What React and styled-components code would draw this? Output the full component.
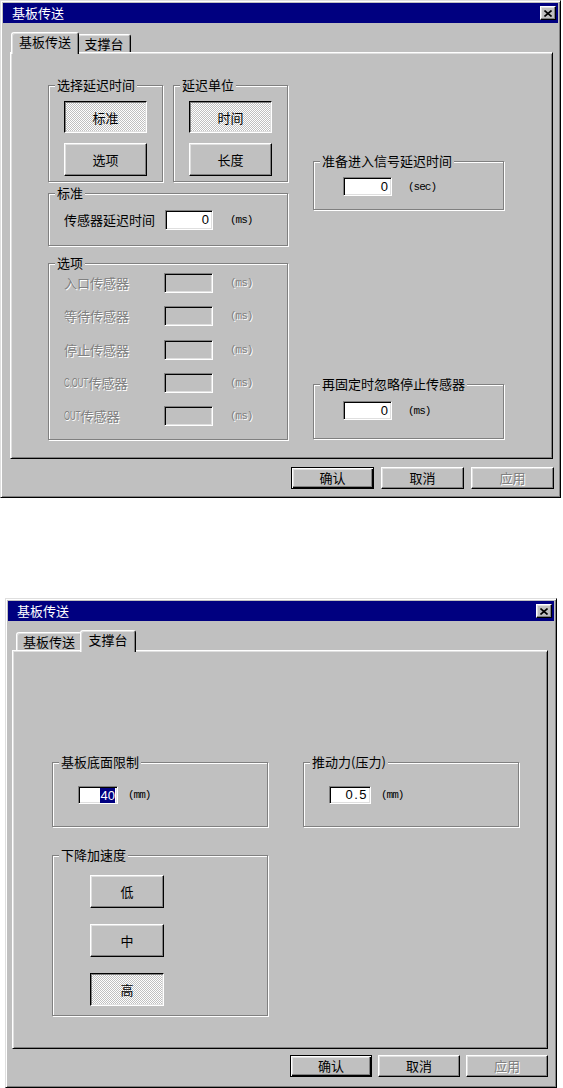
import React from 'react';
import styled, { createGlobalStyle, css } from 'styled-components';

const CJK = `"Noto Sans CJK SC", "Liberation Sans", sans-serif`;
const MONO = `"Liberation Mono", "DejaVu Sans Mono", monospace`;
const NUM = `"Liberation Sans", "Noto Sans CJK SC", sans-serif`;

const GlobalStyle = createGlobalStyle`
  html, body { margin: 0; padding: 0; background: #fff; }
  body { font-family: ${CJK}; font-size: 13px; color: #000; }
  *, *::before, *::after { box-sizing: border-box; }
`;

const Page = styled.div`
  display: flex;
  flex-direction: column;
  align-items: flex-start;
`;

const Window = styled.div`
  width: ${(p) => p.$w}px;
  height: ${(p) => p.$h}px;
  margin: ${(p) => p.$mt || 0}px 0 0 ${(p) => p.$ml || 0}px;
  background: #c0c0c0;
  border: 1px solid;
  border-color: #dfdfdf #000 #000 #dfdfdf;
  box-shadow: inset 1px 1px #fff, inset -1px -1px #808080;
  padding: 2px;
  display: flex;
  flex-direction: column;
`;

const TitleBar = styled.div`
  height: 20px;
  flex: none;
  background: #000080;
  color: #fff;
  display: flex;
  align-items: center;
  justify-content: space-between;
  padding: 0 2px 0 9px;
`;

const TitleText = styled.span`
  font: 13px/20px ${CJK};
`;

const CloseButton = styled.div`
  width: 16px;
  height: 14px;
  background: #c0c0c0;
  display: flex;
  align-items: center;
  justify-content: center;
  border: 1px solid;
  border-color: #fff #000 #000 #fff;
  box-shadow: inset -1px -1px #808080, inset 1px 1px #dfdfdf;
`;

const Body = styled.div`
  padding-left: ${(p) => p.$pl}px;
  display: flex;
  flex-direction: column;
  align-items: flex-start;
`;

const TabStrip = styled.div`
  display: flex;
  align-items: flex-end;
  height: 22px;
  margin-top: 9px;
  margin-bottom: -2px;
  padding-left: ${(p) => p.$pl}px;
  position: relative;
  z-index: 1;
`;

const Tab = styled.div`
  width: ${(p) => p.$w}px;
  height: 18px;
  margin-bottom: 2px;
  display: flex;
  align-items: center;
  justify-content: center;
  background: #c0c0c0;
  border: 1px solid;
  border-bottom: none;
  border-color: #fff #000 transparent #fff;
  border-radius: 3px 3px 0 0;
  box-shadow: inset 1px 1px #dfdfdf, inset -1px 0 #808080;
  font: 13px/14px ${CJK};
  padding-top: 1px;
  ${(p) =>
    p.$active &&
    css`
      width: ${p.$w + 4}px;
      height: 22px;
      margin: 0 -2px;
      padding: 0 0 4px;
      position: relative;
      z-index: 2;
    `}
`;

const Panel = styled.div`
  width: ${(p) => p.$w}px;
  height: ${(p) => p.$h}px;
  flex: none;
  border: 1px solid;
  border-color: #fff #000 #000 #fff;
  box-shadow: inset 1px 1px #dfdfdf, inset -1px -1px #808080;
  padding-left: ${(p) => p.$pl}px;
  display: flex;
  align-items: flex-start;
`;

const Column = styled.div`
  width: ${(p) => p.$w}px;
  margin-left: ${(p) => p.$ml || 0}px;
  display: flex;
  flex-direction: column;
  align-items: flex-start;
`;

const GroupRow = styled.div`
  display: flex;
  align-items: flex-start;
  gap: ${(p) => p.$gap}px;
  margin-top: ${(p) => p.$mt || 0}px;
`;

const Group = styled.div`
  position: relative;
  flex: none;
  width: ${(p) => p.$w}px;
  height: ${(p) => p.$h}px;
  margin-top: ${(p) => p.$mt || 0}px;
  border: 1px solid #808080;
  box-shadow: inset 1px 1px #fff, 1px 1px #fff;
  padding: ${(p) => p.$pt || 0}px 0 0 ${(p) => p.$pl || 0}px;
  display: flex;
  flex-direction: column;
  align-items: ${(p) => (p.$center ? 'center' : 'flex-start')};
  gap: ${(p) => p.$gap || 0}px;
`;

const Legend = styled.span`
  position: absolute;
  top: -8px;
  left: 6px;
  padding: 0 2px;
  background: #c0c0c0;
  font: 13px/14px ${CJK};
  white-space: nowrap;
`;

const FieldRow = styled.div`
  display: flex;
  align-items: center;
  height: ${(p) => p.$h || 20}px;
`;

const Label = styled.span`
  width: ${(p) => p.$w}px;
  display: flex;
  align-items: center;
  font: 13px/14px ${CJK};
  white-space: nowrap;
  ${(p) =>
    p.$disabled &&
    css`
      color: #808080;
      text-shadow: 1px 1px 0 #fff;
    `}
`;

const Latin = styled.span`
  display: inline-block;
  font: 13px/14px ${NUM};
  transform: scaleX(0.6);
  transform-origin: left center;
  margin-right: ${(p) => p.$mr}px;
`;

const TextBox = styled.div`
  width: ${(p) => p.$w}px;
  height: ${(p) => p.$h || 20}px;
  flex: none;
  border: 1px solid;
  border-color: #808080 #fff #fff #808080;
  box-shadow: inset 1px 1px #000, inset -1px -1px #dfdfdf;
  background: ${(p) => (p.$disabled ? '#c0c0c0' : '#fff')};
  display: flex;
  align-items: center;
  justify-content: flex-end;
  padding-right: ${(p) => (p.$pr == null ? 3 : p.$pr)}px;
  font: 13px/14px ${NUM};
  letter-spacing: ${(p) => p.$ls || 0}px;
`;

const Selected = styled.span`
  background: #000080;
  color: #fff;
  line-height: 15px;
  padding: 0 0 0 1px;
`;

const Unit = styled.span`
  margin-left: ${(p) => p.$ml}px;
  font: 11px/14px ${MONO};
  letter-spacing: -1px;
  white-space: nowrap;
  ${(p) =>
    p.$disabled &&
    css`
      color: #808080;
      text-shadow: 1px 1px 0 #fff;
    `}
`;

const OptionList = styled.div`
  display: flex;
  flex-direction: column;
  gap: 13.33px;
`;

const raised = css`
  border: 1px solid;
  border-color: #fff #000 #000 #fff;
  box-shadow: inset -1px -1px #808080, inset 1px 1px #dfdfdf;
  background: #c0c0c0;
`;

const Button = styled.div`
  width: ${(p) => p.$w}px;
  height: ${(p) => p.$h}px;
  flex: none;
  display: flex;
  align-items: center;
  justify-content: center;
  font: 13px/14px ${CJK};
  ${raised}
  ${(p) =>
    p.$pressed &&
    css`
      border-color: #000 #fff #fff #000;
      box-shadow: inset 1px 1px #808080, inset -1px -1px #dfdfdf;
      background-color: #e0e0e0;
      background-image: repeating-conic-gradient(#c0c0c0 0% 25%, #fff 0% 50%);
      background-size: 2px 2px;
      padding-top: 1px;
    `}
  ${(p) =>
    p.$default &&
    css`
      border-color: #000;
      box-shadow: inset 1px 1px #fff, inset -1px -1px #000, inset -2px -2px #808080,
        inset 2px 2px #dfdfdf;
    `}
  ${(p) =>
    p.$disabled &&
    css`
      color: #808080;
      text-shadow: 1px 1px 0 #fff;
    `}
`;

const ButtonRow = styled.div`
  width: ${(p) => p.$w}px;
  margin-top: ${(p) => p.$mt}px;
  display: flex;
  justify-content: flex-end;
  gap: ${(p) => p.$gap}px;
`;

function CloseIcon() {
  return (
    <svg width="8" height="7" viewBox="0 0 8 7">
      <path d="M0.5 0.5 L7.5 6.5 M7.5 0.5 L0.5 6.5" stroke="#000" strokeWidth="1.6" fill="none" />
    </svg>
  );
}

function DialogFrame({ w, h, mt, ml, bodyPl, tabPl, tabWidths, active, panel, buttons, children }) {
  const tabs = ['基板传送', '支撑台'];
  return (
    <Window $w={w} $h={h} $mt={mt} $ml={ml}>
      <TitleBar>
        <TitleText>基板传送</TitleText>
        <CloseButton>
          <CloseIcon />
        </CloseButton>
      </TitleBar>
      <Body $pl={bodyPl}>
        <TabStrip $pl={tabPl}>
          {tabs.map((t, i) => (
            <Tab key={t} $w={tabWidths[i]} $active={i === active}>
              {t}
            </Tab>
          ))}
        </TabStrip>
        <Panel $w={panel.w} $h={panel.h} $pl={panel.pl}>
          {children}
        </Panel>
        <ButtonRow $w={buttons.rowW} $mt={buttons.mt} $gap={buttons.gap}>
          <Button $w={buttons.w} $h={22} $default>
            确认
          </Button>
          <Button $w={buttons.w} $h={22}>
            取消
          </Button>
          <Button $w={buttons.w} $h={22} $disabled>
            应用
          </Button>
        </ButtonRow>
      </Body>
    </Window>
  );
}

const optionRows = [
  { label: '入口传感器' },
  { label: '等待传感器' },
  { label: '停止传感器' },
  { latin: 'C.OUT', mr: -16, label: '传感器' },
  { latin: 'OUT', mr: -11, label: '传感器' },
];

function TransferTab() {
  return (
    <>
      <Column $w={240}>
        <GroupRow $gap={10} $mt={32}>
          <Group $w={115} $h={97} $pt={15} $gap={10} $center>
            <Legend>选择延迟时间</Legend>
            <Button $w={83} $h={32} $pressed>
              标准
            </Button>
            <Button $w={83} $h={33}>
              选项
            </Button>
          </Group>
          <Group $w={115} $h={97} $pt={15} $gap={10} $center>
            <Legend>延迟单位</Legend>
            <Button $w={83} $h={32} $pressed>
              时间
            </Button>
            <Button $w={83} $h={33}>
              长度
            </Button>
          </Group>
        </GroupRow>
        <Group $w={240} $h={53} $mt={11} $pt={16} $pl={15}>
          <Legend>标准</Legend>
          <FieldRow>
            <Label $w={101}>传感器延迟时间</Label>
            <TextBox $w={48}>0</TextBox>
            <Unit $ml={17}>(ms)</Unit>
          </FieldRow>
        </Group>
        <Group $w={240} $h={177} $mt={17} $pt={9} $pl={15}>
          <Legend>选项</Legend>
          <OptionList>
            {optionRows.map((r) => (
              <FieldRow key={(r.latin || '') + r.label}>
                <Label $w={100} $disabled>
                  {r.latin && <Latin $mr={r.mr}>{r.latin}</Latin>}
                  {r.label}
                </Label>
                <TextBox $w={49} $disabled />
                <Unit $ml={17} $disabled>
                  (ms)
                </Unit>
              </FieldRow>
            ))}
          </OptionList>
        </Group>
      </Column>
      <Column $w={191} $ml={25}>
        <Group $w={191} $h={49} $mt={108} $pt={15} $pl={29}>
          <Legend>准备进入信号延迟时间</Legend>
          <FieldRow $h={19}>
            <TextBox $w={49} $h={19}>
              0
            </TextBox>
            <Unit $ml={16}>(sec)</Unit>
          </FieldRow>
        </Group>
        <Group $w={191} $h={55} $mt={174} $pt={16} $pl={29}>
          <Legend>再固定时忽略停止传感器</Legend>
          <FieldRow $h={19}>
            <TextBox $w={49} $h={19}>
              0
            </TextBox>
            <Unit $ml={16}>(ms)</Unit>
          </FieldRow>
        </Group>
      </Column>
    </>
  );
}

function SupportTab() {
  return (
    <Column $w={467}>
      <GroupRow $gap={35} $mt={111}>
        <Group $w={216} $h={65} $pt={23} $pl={25}>
          <Legend>基板底面限制</Legend>
          <FieldRow $h={18}>
            <TextBox $w={40} $h={18} $pr={2}>
              <Selected>40</Selected>
            </TextBox>
            <Unit $ml={10}>(mm)</Unit>
          </FieldRow>
        </Group>
        <Group $w={216} $h={65} $pt={23} $pl={25}>
          <Legend>推动力(压力)</Legend>
          <FieldRow $h={18}>
            <TextBox $w={42} $h={18} $pr={2} $ls={1.5}>
              0.5
            </TextBox>
            <Unit $ml={10}>(mm)</Unit>
          </FieldRow>
        </Group>
      </GroupRow>
      <Group $w={216} $h={161} $mt={28} $pt={19} $pl={37} $gap={16}>
        <Legend>下降加速度</Legend>
        <Button $w={74} $h={33}>
          低
        </Button>
        <Button $w={74} $h={33}>
          中
        </Button>
        <Button $w={74} $h={33} $pressed>
          高
        </Button>
      </Group>
    </Column>
  );
}

export default function App() {
  return (
    <>
      <GlobalStyle />
      <Page>
        <DialogFrame
          w={561}
          h={498}
          bodyPl={7}
          tabPl={3}
          tabWidths={[64, 54]}
          active={0}
          panel={{ w: 543, h: 407, pl: 37 }}
          buttons={{ rowW: 544, mt: 8, gap: 7, w: 83 }}
        >
          <TransferTab />
        </DialogFrame>
        <DialogFrame
          w={552}
          h={490}
          mt={100}
          ml={5}
          bodyPl={4}
          tabPl={4}
          tabWidths={[66, 52]}
          active={1}
          panel={{ w: 536, h: 399, pl: 39 }}
          buttons={{ rowW: 536, mt: 6, gap: 6, w: 82 }}
        >
          <SupportTab />
        </DialogFrame>
      </Page>
    </>
  );
}
